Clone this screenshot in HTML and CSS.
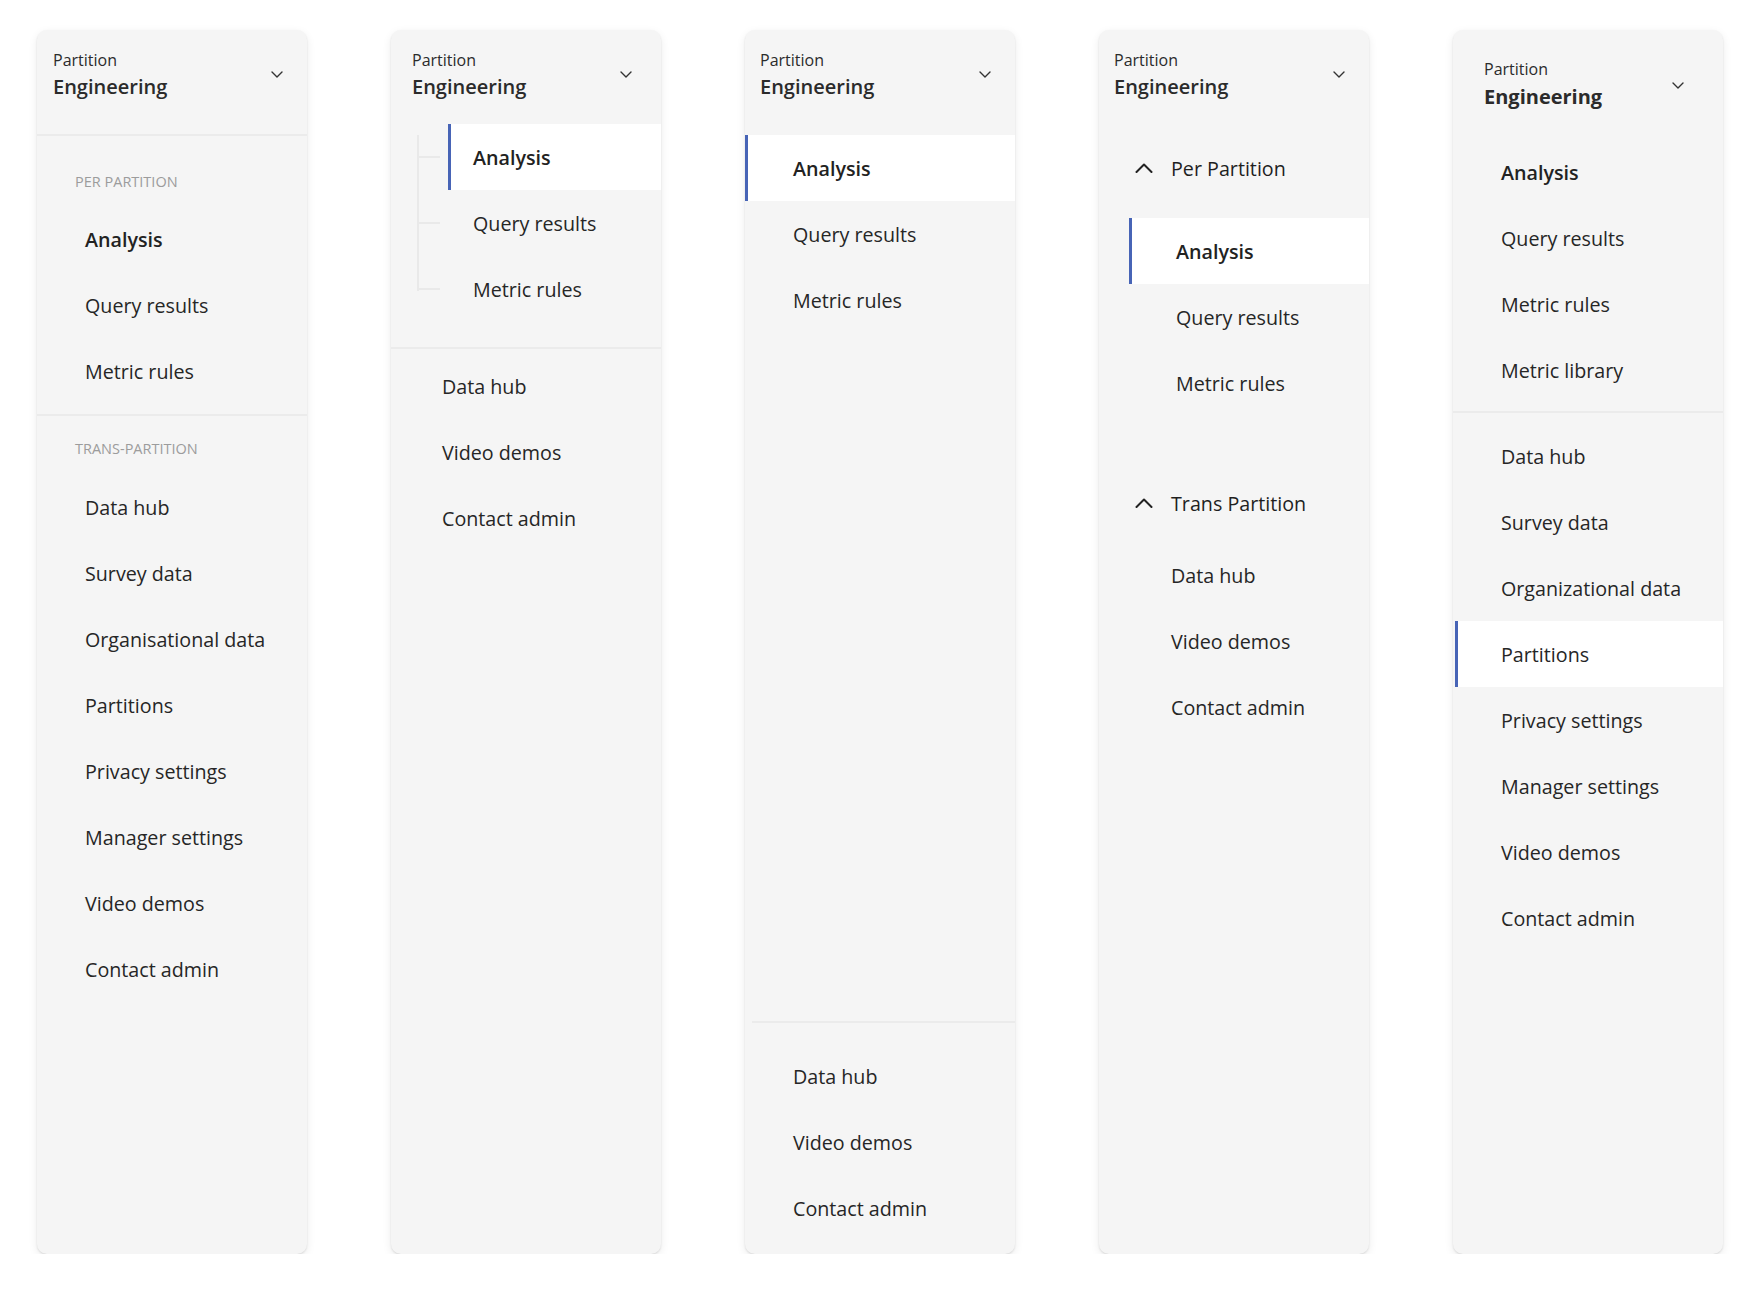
FILE: index.html
```html
<!DOCTYPE html>
<html lang="en">
<head>
<meta charset="utf-8">
<title>Navigation variants</title>
<link rel="stylesheet" href="styles.css">
</head>
<body>
<div class="board">

  <!-- Panel 1 -->
  <nav class="panel">
    <div class="hdr hdr-a">
      <div class="hdr-text">
        <div class="hdr-label">Partition</div>
        <div class="hdr-value">Engineering</div>
      </div>
      <svg class="chev" width="12" height="7" viewBox="0 0 12 7"><path d="M1 1l5 5 5-5" fill="none" stroke="#333" stroke-width="1.4" stroke-linecap="round" stroke-linejoin="round"/></svg>
    </div>
    <div class="divider"></div>
    <div class="sec s1a">
      <div class="sec-label">PER PARTITION</div>
      <div class="item bold">Analysis</div>
      <div class="item">Query results</div>
      <div class="item">Metric rules</div>
    </div>
    <div class="divider"></div>
    <div class="sec s1b">
      <div class="sec-label">TRANS-PARTITION</div>
      <div class="item">Data hub</div>
      <div class="item">Survey data</div>
      <div class="item">Organisational data</div>
      <div class="item">Partitions</div>
      <div class="item">Privacy settings</div>
      <div class="item">Manager settings</div>
      <div class="item">Video demos</div>
      <div class="item">Contact admin</div>
    </div>
  </nav>

  <!-- Panel 2 -->
  <nav class="panel">
    <div class="hdr hdr-b">
      <div class="hdr-text">
        <div class="hdr-label">Partition</div>
        <div class="hdr-value">Engineering</div>
      </div>
      <svg class="chev" width="12" height="7" viewBox="0 0 12 7"><path d="M1 1l5 5 5-5" fill="none" stroke="#333" stroke-width="1.4" stroke-linecap="round" stroke-linejoin="round"/></svg>
    </div>
    <div class="tree">
      <div class="item tree-item active bold">Analysis</div>
      <div class="item tree-item">Query results</div>
      <div class="item tree-item">Metric rules</div>
    </div>
    <div class="divider"></div>
    <div class="sec s2b">
      <div class="item">Data hub</div>
      <div class="item">Video demos</div>
      <div class="item">Contact admin</div>
    </div>
  </nav>

  <!-- Panel 3 -->
  <nav class="panel">
    <div class="hdr hdr-c">
      <div class="hdr-text">
        <div class="hdr-label">Partition</div>
        <div class="hdr-value">Engineering</div>
      </div>
      <svg class="chev" width="12" height="7" viewBox="0 0 12 7"><path d="M1 1l5 5 5-5" fill="none" stroke="#333" stroke-width="1.4" stroke-linecap="round" stroke-linejoin="round"/></svg>
    </div>
    <div class="sec s3a">
      <div class="item active bold">Analysis</div>
      <div class="item">Query results</div>
      <div class="item">Metric rules</div>
    </div>
    <div class="divider divider-inset push-bottom"></div>
    <div class="sec s3b">
      <div class="item">Data hub</div>
      <div class="item">Video demos</div>
      <div class="item">Contact admin</div>
    </div>
  </nav>

  <!-- Panel 4 -->
  <nav class="panel">
    <div class="hdr hdr-c">
      <div class="hdr-text">
        <div class="hdr-label">Partition</div>
        <div class="hdr-value">Engineering</div>
      </div>
      <svg class="chev" width="12" height="7" viewBox="0 0 12 7"><path d="M1 1l5 5 5-5" fill="none" stroke="#333" stroke-width="1.4" stroke-linecap="round" stroke-linejoin="round"/></svg>
    </div>
    <div class="group-hdr g-per">
      <svg class="chev-up" width="18" height="10" viewBox="0 0 18 10"><path d="M1.5 9l7.5-7.5 7.5 7.5" fill="none" stroke="#222" stroke-width="2" stroke-linecap="round" stroke-linejoin="round"/></svg>
      <span>Per Partition</span>
    </div>
    <div class="group-items g-per-items">
      <div class="item active bold">Analysis</div>
      <div class="item">Query results</div>
      <div class="item">Metric rules</div>
    </div>
    <div class="group-hdr g-trans">
      <svg class="chev-up" width="18" height="10" viewBox="0 0 18 10"><path d="M1.5 9l7.5-7.5 7.5 7.5" fill="none" stroke="#222" stroke-width="2" stroke-linecap="round" stroke-linejoin="round"/></svg>
      <span>Trans Partition</span>
    </div>
    <div class="group-items g-trans-items">
      <div class="item">Data hub</div>
      <div class="item">Video demos</div>
      <div class="item">Contact admin</div>
    </div>
  </nav>

  <!-- Panel 5 -->
  <nav class="panel">
    <div class="hdr hdr-e">
      <div class="hdr-text">
        <div class="hdr-label">Partition</div>
        <div class="hdr-value strong">Engineering</div>
      </div>
      <svg class="chev" width="12" height="7" viewBox="0 0 12 7"><path d="M1 1l5 5 5-5" fill="none" stroke="#333" stroke-width="1.4" stroke-linecap="round" stroke-linejoin="round"/></svg>
    </div>
    <div class="sec s5a">
      <div class="item bold">Analysis</div>
      <div class="item">Query results</div>
      <div class="item">Metric rules</div>
      <div class="item">Metric library</div>
    </div>
    <div class="divider"></div>
    <div class="sec s5b">
      <div class="item">Data hub</div>
      <div class="item">Survey data</div>
      <div class="item">Organizational data</div>
      <div class="item active">Partitions</div>
      <div class="item">Privacy settings</div>
      <div class="item">Manager settings</div>
      <div class="item">Video demos</div>
      <div class="item">Contact admin</div>
    </div>
  </nav>

</div>
</body>
</html>
```

FILE: styles.css
```css
* { box-sizing: border-box; }

html, body {
  margin: 0;
  padding: 0;
  background: #ffffff;
}

body {
  font-family: "Open Sans", "Noto Sans", sans-serif;
  color: #242424;
}

.board {
  display: flex;
  gap: 84px;
  padding: 30px 0 0 37px;
}

.panel {
  width: 270px;
  height: 1224px;
  flex: none;
  background: #f5f5f5;
  border-radius: 10px;
  box-shadow: 0 1px 2px rgba(0, 0, 0, 0.11), 0 3px 10px rgba(0, 0, 0, 0.08);
  display: flex;
  flex-direction: column;
  overflow: hidden;
}

/* header */
.hdr {
  display: flex;
  justify-content: space-between;
  align-items: flex-start;
  flex: none;
}
.hdr-text { display: flex; flex-direction: column; }
.hdr-label {
  font-size: 16px;
  line-height: 22px;
  color: #2b2b2b;
}
.hdr-value {
  font-size: 20px;
  line-height: 28px;
  margin-top: 2px;
  font-weight: 600;
  color: #2b2b2b;
}
.hdr-value.strong { font-weight: 700; line-height: 30px; margin-top: 2px; }
.chev { flex: none; margin-top: 22px; }

.hdr-a { height: 104px; padding: 19px 24px 0 16px; }
.hdr-b { height: 94px;  padding: 19px 29px 0 21px; }
.hdr-c { height: 105px; padding: 19px 24px 0 15px; }
.hdr-e { height: 109px; padding: 28px 39px 0 31px; }
.hdr-e .chev { margin-top: 24px; }

.divider {
  height: 2px;
  flex: none;
  background: #ebebeb;
}
.divider-inset { margin-left: 7px; }
.push-bottom { margin-top: auto; }

/* items */
.item {
  height: 66px;
  display: flex;
  align-items: center;
  padding-left: 48px;
  font-size: 19.7px;
  color: #262626;
  white-space: nowrap;
}
.item.bold { font-weight: 600; color: #222; }
.item.active {
  background: #ffffff;
  box-shadow: inset 3px 0 0 #4764b6;
}

.sec { flex: none; }
.sec-label {
  font-size: 14.5px;
  line-height: 22px;
  color: #9c9c9c;
  padding-left: 38px;
}

.s1a { padding-bottom: 10px; }
.s1a .sec-label { padding-top: 35px; margin-bottom: 13px; }
.s1b .sec-label { padding-top: 22px; margin-bottom: 14px; }

/* panel 2 tree */
.tree {
  position: relative;
  padding-left: 57px;
  padding-bottom: 25px;
  flex: none;
}
.tree::before {
  content: "";
  position: absolute;
  left: 26px;
  top: 11px;
  height: 156px;
  width: 2px;
  background: #e9e9e9;
}
.tree-item { position: relative; padding-left: 25px; }
.tree-item::before {
  content: "";
  position: absolute;
  left: -31px;
  top: 32px;
  width: 23px;
  height: 2px;
  background: #e9e9e9;
}
.s2b { padding-top: 4px; }
.s2b .item { padding-left: 51px; }

/* panel 3 */
.s3b { padding-top: 20px; padding-bottom: 13px; }

/* panel 4 groups */
.group-hdr {
  height: 66px;
  display: flex;
  align-items: center;
  gap: 18px;
  padding-left: 36px;
  font-size: 19.7px;
  color: #1f1f1f;
  flex: none;
}
.chev-up { flex: none; }
.g-per { margin-bottom: 17px; }
.g-per-items { padding-left: 30px; }
.g-per-items .item { padding-left: 47px; }
.g-trans { margin-top: 54px; margin-bottom: 6px; }
.g-trans-items .item { padding-left: 72px; }

/* panel 5 */
.s5a { padding-bottom: 8px; }
.s5b { padding-top: 10px; }
.s5b .item.active { margin-left: 2px; padding-left: 46px; }
```
